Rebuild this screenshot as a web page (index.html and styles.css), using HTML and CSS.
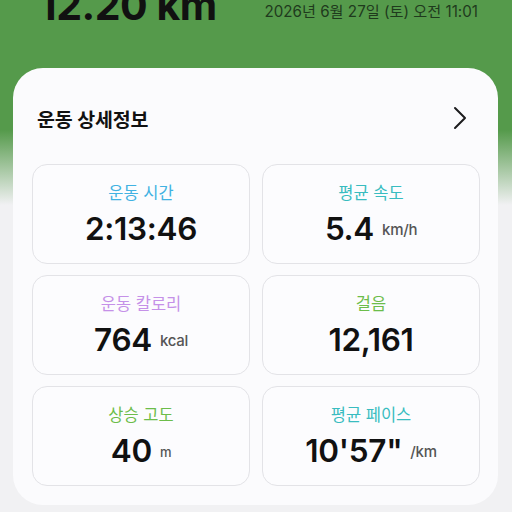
FILE: index.html
```html
<!DOCTYPE html>
<html lang="ko">
  <head>
    <title>운동 기록</title>
    <meta charset="utf-8" />
    <link rel="stylesheet" href="styles.css">
  </head>
  <body>
    <div class="머리">
      <p class="거리">12.20 km</p>
      <p class="날짜">2026년 6월 27일 (토) 오전 11:01</p>
    </div>
    <div class="카드">
      <div class="제목줄">
        <h2>운동 상세정보</h2>
        <svg class="화살표" width="14" height="24" viewBox="0 0 14 24">
          <polyline points="2,2 12,12 2,22" fill="none" stroke="#1c1c1e" stroke-width="2" stroke-linecap="round" stroke-linejoin="round" />
        </svg>
      </div>
      <div class="격자">
        <div class="칸">
          <p class="이름 하늘">운동 시간</p>
          <p class="값">2:13:46</p>
        </div>
        <div class="칸">
          <p class="이름 청록">평균 속도</p>
          <p class="값">5.4<span class="단위">km/h</span></p>
        </div>
        <div class="칸">
          <p class="이름 보라">운동 칼로리</p>
          <p class="값">764<span class="단위">kcal</span></p>
        </div>
        <div class="칸">
          <p class="이름 초록">걸음</p>
          <p class="값">12,161</p>
        </div>
        <div class="칸">
          <p class="이름 초록">상승 고도</p>
          <p class="값">40<span class="단위 작게">m</span></p>
        </div>
        <div class="칸">
          <p class="이름 청록">평균 페이스</p>
          <p class="값">10'57"<span class="단위">/km</span></p>
        </div>
      </div>
    </div>
  </body>
</html>
```

FILE: styles.css
```css
body {
  margin: 0;
  height: 512px;
  overflow: hidden;
  font-family: Inter, "Noto Sans CJK KR", sans-serif;
  background: linear-gradient(#559a4b 0, #559a4b 130px, #f1f1f3 205px);
  color: #111;
}
p, h2 {
  margin: 0;
}
.머리 {
  height: 68px;
  display: flex;
  align-items: flex-start;
  justify-content: space-between;
  padding: 0 34px 0 39px;
  box-sizing: border-box;
}
.거리 {
  font-size: 41px;
  font-weight: 700;
  line-height: 42px;
  margin-top: -16px;
  letter-spacing: -0.5px;
}
.날짜 {
  font-size: 15.2px;
  line-height: 20px;
  margin-top: 2px;
  color: #1f3a1d;
}
.카드 {
  margin: 0 14px 0 13px;
  background: #fbfbfd;
  border-radius: 30px;
  padding: 38px 18px 19px 19px;
}
.제목줄 {
  display: flex;
  justify-content: space-between;
  align-items: center;
  height: 24px;
  padding: 0 13px 0 5px;
  margin-bottom: 34px;
}
.제목줄 h2 {
  font-size: 19.5px;
  font-weight: 600;
  letter-spacing: -0.2px;
}
.격자 {
  display: grid;
  grid-template-columns: 218px 218px;
  grid-auto-rows: 100px;
  column-gap: 12px;
  row-gap: 11px;
}
.칸 {
  border: 1px solid #e3e3e7;
  border-radius: 15px;
  background: #fcfcfe;
  display: flex;
  flex-direction: column;
  align-items: center;
  padding-top: 18px;
  box-sizing: border-box;
}
.이름 {
  font-size: 16.5px;
  line-height: 20px;
}
.하늘 { color: #41b2e2; }
.청록 { color: #39bcc0; }
.보라 { color: #c591e8; }
.초록 { color: #6cbd4a; }
.값 {
  margin-top: 8px;
  font-size: 31.5px;
  font-weight: 600;
  line-height: 36px;
  letter-spacing: -0.3px;
}
.단위 {
  font-size: 15px;
  font-weight: 500;
  color: #555;
  margin-left: 8px;
  vertical-align: 5px;
}
.작게 {
  font-size: 13px;
}
```
